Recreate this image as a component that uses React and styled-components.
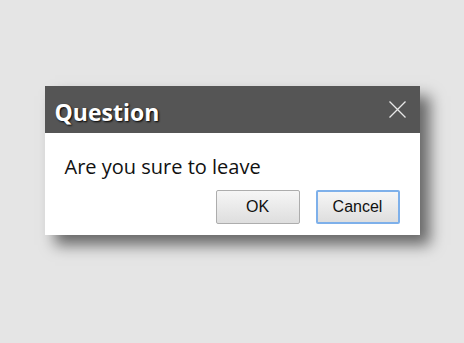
import styled, { createGlobalStyle } from 'styled-components'

const GlobalStyle = createGlobalStyle`
  html, body {
    margin: 0;
    padding: 0;
    background: #e5e5e5;
  }
  #root {
    min-height: 343px;
  }
`

const Page = styled.div`
  display: flex;
  justify-content: center;
  padding-top: 86px;
  min-height: 343px;
  box-sizing: border-box;
  background: #e5e5e5;
`

const Dialog = styled.div`
  width: 375px;
  height: 149px;
  background: #ffffff;
  box-shadow: 10px 10px 14px rgba(0, 0, 0, 0.55);
  display: flex;
  flex-direction: column;
`

const Header = styled.div`
  height: 47px;
  background: #555555;
  display: flex;
  align-items: center;
  justify-content: space-between;
  padding: 0 14px 0 10px;
`

const Title = styled.h1`
  margin: 0;
  font-family: 'Open Sans', sans-serif;
  font-weight: 700;
  font-size: 23px;
  color: #ffffff;
  text-shadow: 1px 1px 2px #000000;
  padding-top: 4px;
`

const CloseButton = styled.button`
  border: none;
  background: none;
  padding: 0;
  width: 17px;
  height: 17px;
  display: flex;
  cursor: pointer;
`

const Body = styled.div`
  flex: 1;
  display: flex;
  flex-direction: column;
  padding: 22px 20px 11px 20px;
`

const Message = styled.p`
  margin: 0;
  font-family: 'Open Sans', sans-serif;
  font-size: 20px;
  color: #111111;
  line-height: 24px;
`

const Actions = styled.div`
  margin-top: auto;
  display: flex;
  justify-content: flex-end;
  gap: 16px;
`

const Button = styled.button`
  width: 84px;
  height: 34px;
  box-sizing: border-box;
  font-family: 'Liberation Sans', Arial, sans-serif;
  font-size: 16px;
  color: #111111;
  background: linear-gradient(#f6f6f6, #dedede);
  border: ${(p) => (p.focused ? '2px solid #7eb0ea' : '1px solid #adadad')};
  border-radius: 2px;
  padding: 0;
  cursor: pointer;
`

function App() {
  return (
    <>
      <GlobalStyle />
      <Page>
        <Dialog>
          <Header>
            <Title>Question</Title>
            <CloseButton aria-label="Close">
              <svg width="17" height="17" viewBox="0 0 17 17">
                <path d="M0.5 0.5 L16.5 16.5 M16.5 0.5 L0.5 16.5" stroke="#e8e8e8" strokeWidth="1.3" />
              </svg>
            </CloseButton>
          </Header>
          <Body>
            <Message>Are you sure to leave</Message>
            <Actions>
              <Button>OK</Button>
              <Button focused>Cancel</Button>
            </Actions>
          </Body>
        </Dialog>
      </Page>
    </>
  )
}

export default App
